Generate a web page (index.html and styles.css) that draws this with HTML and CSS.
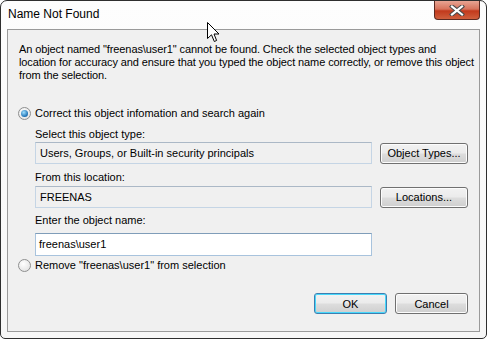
FILE: index.html
```html
<!DOCTYPE html>
<html lang="en">
<head>
  <meta charset="UTF-8">
  <title>Name Not Found</title>
  <link rel="stylesheet" href="styles.css">
</head>
<body>
  <div class="window">
    <div class="titlebar">
      <span class="title">Name Not Found</span>
      <div class="close">
        <svg width="16" height="11" viewBox="0 0 16 11">
          <path d="M3 1.5 L13 9.5 M13 1.5 L3 9.5" stroke="#4a4a4a" stroke-width="4.2" stroke-linecap="square"/>
          <path d="M3 1.5 L13 9.5 M13 1.5 L3 9.5" stroke="#fff" stroke-width="2.2" stroke-linecap="square"/>
        </svg>
      </div>
    </div>
    <div class="client">
      <p class="message">An object named "freenas\user1" cannot be found. Check the selected object types and<br>location for accuracy and ensure that you typed the object name correctly, or remove this object<br>from the selection.</p>

      <div class="option first">
        <span class="radio checked"></span>
        <span>Correct this object infomation and search again</span>
      </div>

      <div class="fields">
        <div class="label type-label">Select this object type:</div>
        <div class="row type-row">
          <div class="field readonly">Users, Groups, or Built-in security principals</div>
          <button class="btn">Object Types...</button>
        </div>

        <div class="label location-label">From this location:</div>
        <div class="row location-row">
          <div class="field readonly">FREENAS</div>
          <button class="btn">Locations...</button>
        </div>

        <div class="label name-label">Enter the object name:</div>
        <div class="row name-row">
          <div class="field edit">freenas\user1</div>
        </div>
      </div>

      <div class="option second">
        <span class="radio"></span>
        <span>Remove "freenas\user1" from selection</span>
      </div>

      <div class="actions">
        <button class="btn default">OK</button>
        <button class="btn">Cancel</button>
      </div>
    </div>

    <svg class="cursor" width="13" height="21" viewBox="0 0 13 21">
      <path d="M0.5 0.5 L0.5 16.5 L4.5 12.8 L7.3 19.5 L9.6 18.5 L7 12 L12 12 Z" fill="#fff" stroke="#000" stroke-width="1" stroke-linejoin="miter"/>
    </svg>
  </div>
</body>
</html>
```

FILE: styles.css
```css
body {
  margin: 0;
  background: #fff;
  font-family: 'Liberation Sans', Arial, sans-serif;
  font-size: 11px;
  color: #000;
}
.window {
  position: relative;
  width: 487px;
  height: 339px;
  box-sizing: border-box;
  border: 1px solid #2e2e2e;
  border-radius: 7px 7px 5px 5px;
  background: linear-gradient(to bottom, #fdfdfd, #f6f6f6);
  padding: 0 6px 6px 6px;
  display: flex;
  flex-direction: column;
}
.titlebar {
  height: 28px;
  flex: none;
  display: flex;
  align-items: center;
  justify-content: space-between;
}
.title {
  padding-left: 1px;
  font-size: 12px;
  margin-top: -2px;
}
.close {
  position: absolute;
  top: 0;
  right: 6px;
  width: 46px;
  height: 19px;
  box-sizing: border-box;
  border: 1px solid #5b2a22;
  border-top: none;
  border-radius: 0 0 4px 4px;
  background: linear-gradient(to bottom, #e8a493 0%, #d7735c 45%, #c2391c 55%, #cf5f3d 100%);
  display: flex;
  align-items: center;
  justify-content: center;
}
.client {
  flex: 1;
  border: 1px solid #9a9a9a;
  background: #f0f0f0;
  padding: 0 11px;
  display: flex;
  flex-direction: column;
}
.message {
  margin: 13px 0 0 0;
  line-height: 13px;
  letter-spacing: -0.1px;
  white-space: nowrap;
}
.option {
  display: flex;
  align-items: center;
  gap: 4px;
  margin-left: -1px;
  height: 14px;
}
.option.first {
  margin-top: 24px;
}
.option.second {
  margin-top: 2px;
}
.radio {
  width: 11px;
  height: 11px;
  border: 1px solid #8e8f8f;
  border-radius: 50%;
  background: radial-gradient(circle at 40% 35%, #ffffff, #dcdcdc);
  display: flex;
  align-items: center;
  justify-content: center;
}
.radio.checked::after {
  content: "";
  width: 7px;
  height: 7px;
  border-radius: 50%;
  background: radial-gradient(circle at 40% 35%, #9fe0ff, #1b6fb3 70%, #0d4d86);
}
.fields {
  padding-left: 16px;
}
.label {
  height: 14px;
  line-height: 14px;
}
.type-label {
  margin-top: 7px;
}
.location-label {
  margin-top: 6px;
}
.name-label {
  margin-top: 5px;
}
.row {
  display: flex;
  align-items: center;
  gap: 8px;
}
.type-row {
  margin-top: 1px;
}
.location-row {
  margin-top: 2px;
}
.name-row {
  margin-top: 6px;
}
.field {
  width: 337px;
  height: 22px;
  box-sizing: border-box;
  padding-left: 4px;
  line-height: 20px;
  border: 1px solid #c5d5e5;
  border-top-color: #abb8c6;
}
.field.readonly {
  background: #f0f0f0;
}
.field.edit {
  background: #fff;
  height: 23px;
  line-height: 21px;
  padding-left: 3px;
  border-color: #a8c3dd;
  border-top-color: #7f9db9;
}
.btn {
  width: 88px;
  height: 21px;
  box-sizing: border-box;
  border: 1px solid #707070;
  border-radius: 3px;
  background: linear-gradient(to bottom, #f2f2f2 0%, #ebebeb 48%, #dddddd 52%, #cfcfcf 100%);
  font-family: inherit;
  font-size: 11px;
  color: #000;
  padding: 0;
  box-shadow: inset 0 0 0 1px #fcfcfc;
}
.actions {
  margin-top: auto;
  margin-bottom: 17px;
  display: flex;
  justify-content: flex-end;
  gap: 8px;
}
.actions .btn {
  width: 73px;
}
.btn.default {
  border-color: #3c7fb1;
  box-shadow: inset 0 0 0 1px #48d8fb;
}
.cursor {
  position: absolute;
  left: 206px;
  top: 21px;
}
```
